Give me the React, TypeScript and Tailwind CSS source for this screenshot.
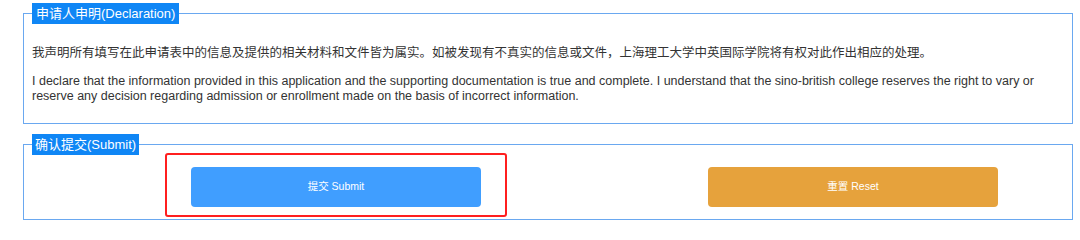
export default function App() {
  const font = { fontFamily: '"Liberation Sans", "Noto Sans CJK SC", sans-serif' };

  return (
    <div className="w-[1080px] h-[231px] bg-white text-[#333]" style={font}>
      <div className="pl-[23px] pr-[7px] pt-[3px]">
        {/* 申明 */}
        <fieldset className="border border-[#6aa8f0] px-2">
          <legend className="bg-[#0f86f5] text-white text-[13px] leading-[21px] px-[4px]">
            申请人申明(Declaration)
          </legend>
          <p className="mt-[22px] text-[12.5px] leading-[15px]">
            我声明所有填写在此申请表中的信息及提供的相关材料和文件皆为属实。如被发现有不真实的信息或文件，上海理工大学中英国际学院将有权对此作出相应的处理。
          </p>
          <p className="mt-[13px] mb-[19px] text-[12.5px] leading-[15px]">
            I declare that the information provided in this application and the supporting documentation is true and complete. I understand that the sino-british college reserves the right to vary or reserve any decision regarding admission or enrollment made on the basis of incorrect information.
          </p>
        </fieldset>

        {/* 提交 */}
        <fieldset className="mt-[10px] border border-[#6aa8f0] px-2 pb-[2px]">
          <legend className="bg-[#0f86f5] text-white text-[13px] leading-[21px] px-[3px]">
            确认提交(Submit)
          </legend>
          <div className="flex items-start -mt-[2px] pl-[133px]">
            <div className="border-2 border-[#ff1f1f] rounded-[3px] pt-[12px] pb-[8px] px-[24px]">
              <button className="w-[290px] h-[40px] rounded-[4px] bg-[#409eff] text-white text-[10.5px]">
                提交 Submit
              </button>
            </div>
            <button className="mt-[14px] ml-[201px] w-[290px] h-[40px] rounded-[4px] bg-[#e6a23c] text-white text-[10.5px]">
              重置 Reset
            </button>
          </div>
        </fieldset>
      </div>
    </div>
  );
}
